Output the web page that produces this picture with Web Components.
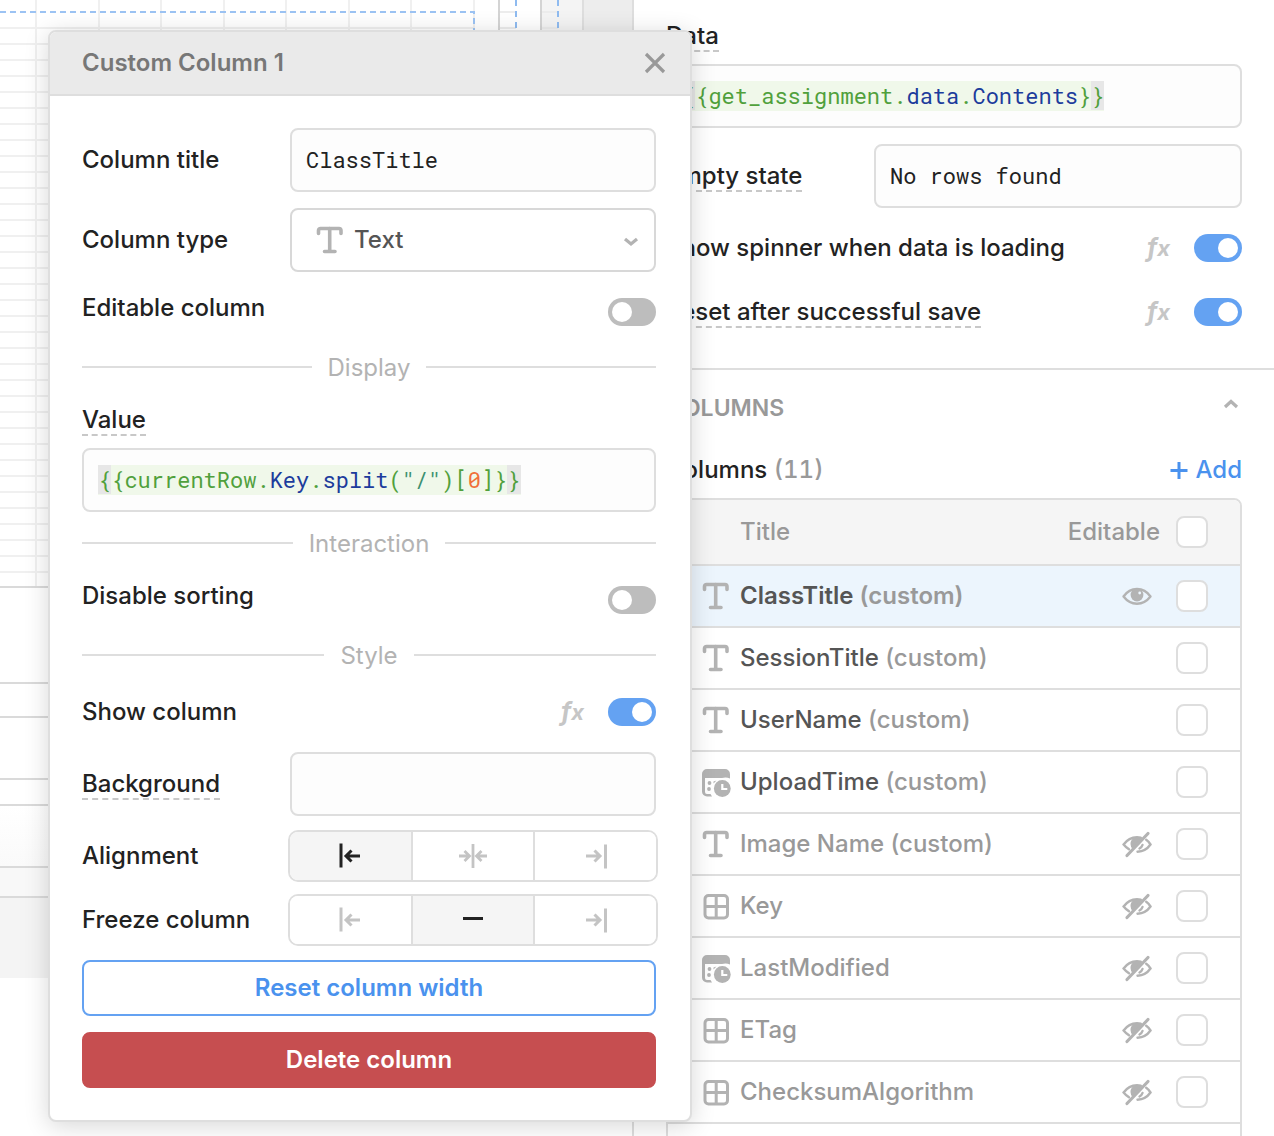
<!DOCTYPE html>
<html lang="en">
<head>
<meta charset="utf-8">
<title>Custom Column 1</title>
<style>
  html, body { margin: 0; height: 100%; }
  body {
    --ink: #222; --mid: #999; --soft: #b3b3b3; --line: #dedede; --field: #fdfdfd;
    --blue: #4a92ee; --blue-soft: #64a2f2; --red: #c64e50;
    --mono: "Roboto Mono", "Liberation Mono", monospace;
    font: 500 24px/40px Inter, "Liberation Sans", sans-serif;
    color: var(--ink); background: #fff; overflow: hidden;
  }
</style>
</head>
<body>
<app-shell>
  <design-canvas></design-canvas>
  <side-panel></side-panel>
  <column-editor slot="popover" heading="Custom Column 1">
    <text-row label="Column title" value="ClassTitle"></text-row>
    <select-row label="Column type" value="Text"></select-row>
    <toggle-row label="Editable column" raised></toggle-row>
    <section-divider>Display</section-divider>
    <code-field label="Value" code='g:{{currentRow.|b:Key|g:.|b:split|g:(|t:"/"|g:)[|o:0|g:]}}'></code-field>
    <section-divider>Interaction</section-divider>
    <toggle-row label="Disable sorting" raised></toggle-row>
    <section-divider>Style</section-divider>
    <toggle-row label="Show column" fx checked></toggle-row>
    <text-row label="Background" value="" hint></text-row>
    <segment-row label="Alignment" options="left,center,right" selected="left"></segment-row>
    <segment-row label="Freeze column" options="left,none,right" selected="none"></segment-row>
    <action-button>Reset column width</action-button>
    <action-button kind="danger">Delete column</action-button>
  </column-editor>
</app-shell>

<script>
const ICONS = {
  text: '<g fill="none" stroke="currentColor" stroke-width="3.600" stroke-linecap="round" stroke-linejoin="round"><path d="M3.500 8.500V5.500a2 2 0 0 1 2-2h18.500a2 2 0 0 1 2 2V8.500"/><path d="M14.700 3.500v23M9.500 26.500h10.500"/></g>',
  grid: '<g fill="none" stroke="currentColor" stroke-width="3"><rect x="4" y="4.500" width="22.500" height="22.500" rx="3.500"/><path d="M15.200 4.500v22.500M4 15.500h22.500"/></g>',
  date: '<path fill="currentColor" d="M6 2h18a5 5 0 0 1 5 5v4.500a10.500 10.500 0 0 0-8-.5H4V25a2 2 0 0 0 2 2h3.500l1.500 2.500H6a5 5 0 0 1-5-5V7a5 5 0 0 1 5-5z"/><path fill="currentColor" d="M12.500 14.500l3-.9-3 3z"/><circle cx="8.500" cy="16" r="1.900" fill="currentColor"/><circle cx="8" cy="22" r="1.900" fill="currentColor"/><circle cx="21.300" cy="21.500" r="8.400" fill="currentColor"/><path d="M21.300 17v5h5" fill="none" stroke="#fff" stroke-width="2.200"/>',
  eye: '<path d="M1.500 15.500C5 10.500 9.500 8 15 8s10 2.500 13.500 7.500C25 20 20.500 22.700 15 22.700S5 20 1.500 15.500z" fill="none" stroke="currentColor" stroke-width="2.400" stroke-linejoin="round"/><circle cx="15" cy="14" r="6.400" fill="currentColor"/><circle cx="17.700" cy="12" r="1.400" fill="#ecf5fd"/>',
  hidden: '<g fill="none" stroke="currentColor" stroke-width="2.400" stroke-linecap="round"><path d="M7 20.300C5 19 3.200 17.500 1.600 15.500 5 10.700 9.500 8.200 15 8.200c1.300 0 2.500.1 3.700.4"/><path d="M24.200 10.800c1.700 1.200 3.100 2.800 4.300 4.700-3.300 4.700-7.500 7-13 7.200"/><path d="M20.500 16c-.5 1.600-1.500 2.700-3 3.500"/></g><path fill="currentColor" d="M20.500 8.500L11 20.500a7 7 0 0 1-2.500-5.500c0-4 3-7 7-7z"/><path d="M26 4.500L5 26.500" stroke="currentColor" stroke-width="3.200" stroke-linecap="round"/>',
  close: '<path d="M6 6l18 18M24 6L6 24" stroke="currentColor" stroke-width="3.200" fill="none"/>',
  down: '<path d="M9 14l6 5 6-5" fill="none" stroke="currentColor" stroke-width="3.200"/>',
  up: '<path d="M9 18l6-5.500 6 5.500" fill="none" stroke="currentColor" stroke-width="3.200"/>',
  left: '<path d="M6 2.500v24M10.500 15H25M16.500 9.500L11 15l5.500 5.500" fill="none" stroke="currentColor" stroke-width="3"/>',
  right: '<path d="M24.500 3.500v24M5 15H19M13.500 9.500l5.500 5.500-5.500 5.500" fill="none" stroke="currentColor" stroke-width="3"/>',
  center: '<path d="M15 3v24M1 15h10M6.500 10l5 5-5 5M29 15H19M23.500 10l-5 5 5 5" fill="none" stroke="currentColor" stroke-width="2.800"/>',
  none: '<path d="M5 13.500h20" stroke="currentColor" stroke-width="3"/>',
  plus: '<path d="M15 7v17M6.500 15.500h17" stroke="currentColor" stroke-width="3"/>'
};
const icon = name => `<svg class="icon" viewBox="0 0 30 30" width="30" height="30" aria-hidden="true">${ICONS[name]}</svg>`;

const BASE = `
  *, *::before { box-sizing: border-box; }
  :host { display: block; }
  .icon { display: block; flex: none; }
  .row { display: flex; align-items: center; }
  .name { flex: none; width: 208px; }
  .hint { display: inline-block; line-height: 28px; border-bottom: 2px dashed #c8c8c8; }
  .box { width: 100%; min-width: 0; height: 64px; margin: 0; padding: 0 14px 2px;
         border: 2px solid var(--line); border-radius: 8px; background: var(--field); color: var(--ink); }
  .row > .box { flex: 1; }
  .mono { font: 400 22px/30px var(--mono); }`;

class Base extends HTMLElement {
  constructor() { super(); this.attachShadow({ mode: "open" }); }
  connectedCallback() { this.shadowRoot.innerHTML = `<style>${BASE}${this.css()}</style>${this.html()}`; }
  css() { return ""; }
  html() { return "<slot></slot>"; }
  get label() {
    const t = this.getAttribute("label");
    return this.hasAttribute("hint") ? `<span class="hint">${t}</span>` : t;
  }
}

customElements.define("app-shell", class extends Base {
  css() { return `:host { display: flex; position: relative; height: 100vh; overflow: hidden; }
    ::slotted(design-canvas) { flex: 1; min-width: 0; }
    ::slotted(side-panel) { flex: none; width: 642px; }
    ::slotted([slot=popover]) { position: absolute; left: 48px; top: 30px; width: 644px; }`; }
  html() { return `<slot></slot><slot name="popover"></slot>`; }
});

customElements.define("design-canvas", class extends Base {
  css() { return `:host { display: flex; align-items: flex-start; overflow: hidden; }
    .frame { flex: 1; min-width: 0; border-right: 2px solid #d4d4d4; }
    .frame svg { display: block; width: 100%; height: 586px; }
    .frame div { border-top: 2px solid #dadada; }
    .a { height: 96px; } .b { height: 34px; } .c { height: 62px; } .d { height: 26px; }
    .e { height: 62px; background: linear-gradient(#fff, #fafafa); }
    .f { height: 30px; background: #f8f8f8; } .g { height: 82px; background: #f4f4f4; }
    .strip { flex: none; width: 42px; height: 978px; border-right: 2px solid #d4d4d4; background: #fff; }
    .strip svg { display: block; width: 18px; height: 100%; }
    .grey { background: #f4f4f4; border-color: #dedede; }
    .edge { width: 48px; background: #ededed; border: 0; }`; }
  html() {
    let lines = "";
    for (const x of [36, 99, 161, 224, 286, 349, 411]) lines += `M${x} 0V586`;
    for (let y = 28; y < 586; y += 16) lines += `M0 ${y}H474`;
    const guide = '<svg><path d="M0 12H16M0 28H16" stroke="#ededed" stroke-width="2"/><path d="M16 0V586" stroke="#8fbbf0" stroke-width="2" stroke-dasharray="6 5"/></svg>';
    return `<div class="frame"><svg><path d="${lines}" stroke="#f0f0f0" stroke-width="2"/><path d="M474 0V586" stroke="#f0f0f0" stroke-width="2"/>
      <path d="M0 12H474V586" fill="none" stroke="#9cc3f3" stroke-width="2" stroke-dasharray="6 4"/></svg>
      <div class="a"></div><div class="b"></div><div class="c"></div><div class="d"></div><div class="e"></div><div class="f"></div><div class="g"></div></div>
      <div class="strip">${guide}</div><div class="strip grey">${guide}</div><div class="strip edge"></div>`;
  }
});

customElements.define("column-editor", class extends Base {
  css() { return `:host { background: #fff; border: 2px solid var(--line); border-radius: 8px; overflow: hidden;
      box-shadow: 0 4px 24px rgba(0,0,0,.16); box-sizing: border-box; }
    header { display: flex; align-items: center; justify-content: space-between; height: 64px; padding: 0 20px 0 32px;
      background: #eaeaea; border-bottom: 2px solid var(--line); }
    h2 { margin: 0; font: 600 24px/40px Inter, sans-serif; color: #777; }
    button { padding: 0; border: 0; background: none; color: #999; }
    .body { display: flex; flex-direction: column; gap: 16px; padding: 32px 34px 32px 32px; }`; }
  html() { return `<header><h2>${this.getAttribute("heading")}</h2><button type="button" aria-label="Close">${icon("close")}</button></header>
    <div class="body"><slot></slot></div>`; }
});

customElements.define("text-row", class extends Base {
  html() { return `<div class="row"><label class="name" for="f">${this.label}</label>
    <input class="box mono" id="f" type="text" value="${this.getAttribute("value")}"></div>`; }
});

customElements.define("select-row", class extends Base {
  css() { return `.wrap { flex: 1; min-width: 0; display: grid; grid-template-columns: 1fr auto; align-items: center; color: var(--soft); }
    .wrap > * { grid-row: 1; }
    select { grid-column: 1 / -1; appearance: none; }
    select.box { font: 500 24px/40px Inter, sans-serif; background: #fff; border-color: #d8d8d8; color: #555; padding: 0 0 0 62px; }
    .kind { grid-column: 1; padding-left: 25px; pointer-events: none; }
    .arrow { grid-column: 2; padding-right: 10px; pointer-events: none; }`; }
  html() { return `<div class="row"><label class="name" for="f">${this.label}</label><span class="wrap">
    <select class="box" id="f"><option>${this.getAttribute("value")}</option></select>
    <span class="kind">${icon("text")}</span><span class="arrow">${icon("down")}</span></span></div>`; }
});

customElements.define("toggle-row", class extends Base {
  css() { return `.row { height: 48px; }
    label { flex: 1; }
    :host([raised]) label { align-self: flex-start; }
    .fx { width: 47px; padding-bottom: 2px; font: italic 700 25px/40px Inter, sans-serif; color: #c6c6c6; }
    .fx small { font-size: 22px; }
    input { appearance: none; flex: none; width: 48px; height: 28px; margin: 0; padding: 4px; border-radius: 14px; background: #bdbdbd; display: flex; }
    input::before { content: ""; width: 20px; height: 20px; border-radius: 50%; background: #fff; }
    input:checked { background: var(--blue-soft); justify-content: flex-end; }`; }
  html() { return `<div class="row"><label for="f">${this.label}</label>${this.hasAttribute("fx") ? '<span class="fx">f<small>x</small></span>' : ""}
    <input id="f" type="checkbox" role="switch" ${this.hasAttribute("checked") ? "checked" : ""}></div>`; }
});

customElements.define("section-divider", class extends Base {
  css() { return `:host { display: flex; align-items: center; gap: 16px; height: 30px; margin-bottom: 2px; color: var(--soft); font-weight: 400; }
    span { padding-top: 2px; }
    i { flex: 1; height: 2px; background: var(--line); }`; }
  html() { return `<i></i><span><slot></slot></span><i></i>`; }
});

customElements.define("code-field", class extends Base {
  css() { return `:host { display: flex; flex-direction: column; gap: 8px; }
    .box { display: flex; align-items: center; padding-bottom: 0; white-space: pre; }
    code { font: inherit; background: #f0f8ea; }
    .g { color: #50a03c; } .b { color: #1c3c9c; } .t { color: #3c9070; } .o { color: #f07038; }
    .m { background: #e7e7e7; }`; }
  html() {
    let out = this.getAttribute("code").split("|").map(p => `<span class="${p[0]}">${p.slice(2)}</span>`).join("");
    out = out.replace("{{", '<span class="m">{</span>{').replace(/}}(?=<\/span>$)/, '}<span class="m">}</span>');
    return `<div id="l"><span class="hint">${this.getAttribute("label")}</span></div>
      <div class="box mono" role="textbox" aria-labelledby="l" contenteditable="true" spellcheck="false"><code>${out}</code></div>`;
  }
});

customElements.define("segment-row", class extends Base {
  css() { return `.row { height: 48px; }
    .set { flex: 1; display: flex; height: 52px; margin: -2px; border: 2px solid var(--line); border-radius: 10px; overflow: hidden; }
    label { flex: 1; display: grid; place-items: center; color: #c4c4c4; background: #fff; }
    label + label { border-left: 2px solid var(--line); }
    label:has(:checked) { background: #f5f5f5; color: var(--ink); }
    input { appearance: none; width: 100%; height: 100%; margin: 0; grid-area: 1 / 1; }
    .icon { grid-area: 1 / 1; pointer-events: none; }`; }
  html() {
    const sel = this.getAttribute("selected");
    return `<div class="row" role="radiogroup" aria-labelledby="l"><span class="name" id="l">${this.label}</span><div class="set">` +
      this.getAttribute("options").split(",").map(o => `<label><input type="radio" name="s" aria-label="${o}" ${o === sel ? "checked" : ""}>${icon(o)}</label>`).join("") + `</div></div>`;
  }
});

customElements.define("action-button", class extends Base {
  css() { return `button { display: block; width: 100%; height: 56px; padding: 0; border: 2px solid var(--blue-soft); border-radius: 8px;
      background: #fff; color: var(--blue); font: 600 24px/40px Inter, sans-serif; }
    :host([kind=danger]) button { background: var(--red); border-color: var(--red); color: #fff; }`; }
  html() { return `<button type="button"><slot></slot></button>`; }
});

customElements.define("side-panel", class extends Base {
  css() { return `:host { box-sizing: border-box; border-left: 2px solid var(--line); background: #fff; overflow: hidden; }
    .fields { display: flex; flex-direction: column; gap: 16px; padding: 16px 32px 32px; border-bottom: 2px solid var(--line); }
    .cols { padding: 18px 32px 0; }
    .bar { display: flex; align-items: center; justify-content: space-between; height: 40px; }
    h3 { margin: 0; font: 600 23px/40px Inter, sans-serif; color: var(--mid); }
    .fold { padding: 0 0 8px; margin-right: -4px; border: 0; background: none; color: var(--soft); }
    .list { margin: 22px 0 8px; }
    .count { color: var(--mid); font-variant-numeric: tabular-nums; }
    .add { display: flex; align-items: center; gap: 2px; padding: 0; border: 0; background: none; color: var(--blue); font: 500 24px/40px Inter, sans-serif; }`; }
  html() { return `<div class="fields">
      <code-field label="Data" code="g:{{get_assignment.|b:data|g:.|b:Contents|g:}}"></code-field>
      <text-row label="Empty state" value="No rows found" hint></text-row>
      <toggle-row label="Show spinner when data is loading" fx checked></toggle-row>
      <toggle-row label="Reset after successful save" hint fx checked></toggle-row>
    </div>
    <section class="cols">
      <div class="bar"><h3>COLUMNS</h3><button class="fold" type="button" aria-label="Collapse">${icon("up")}</button></div>
      <div class="bar list"><span>Columns <span class="count">(11)</span></span><button class="add" type="button">${icon("plus")}Add</button></div>
      <column-table></column-table>
    </section>`; }
});

const COLUMNS = [
  ["text", "ClassTitle", true, "eye"], ["text", "SessionTitle", true, ""], ["text", "UserName", true, ""],
  ["date", "UploadTime", true, ""], ["text", "Image Name", true, "hidden"], ["grid", "Key", false, "hidden"],
  ["date", "LastModified", false, "hidden"], ["grid", "ETag", false, "hidden"], ["grid", "ChecksumAlgorithm", false, "hidden"]
];
customElements.define("column-table", class extends Base {
  css() { return `:host { border: 2px solid var(--line); border-radius: 8px 8px 0 0; overflow: hidden; }
    table { width: 100%; border-spacing: 0; table-layout: fixed; }
    th, td { padding: 0; height: 60px; border-bottom: 2px solid var(--line); text-align: left; font-weight: 500; line-height: 40px; color: #555; box-sizing: content-box; }
    th { height: 64px; background: #f5f5f5; color: var(--mid); }
    td > .icon { color: var(--soft); }
    td:first-child > .icon { margin-left: 33px; }
    .k { width: 72px; } .v { width: 100px; } .c { width: 80px; }
    .v { text-align: right; }
    td.v > .icon { margin-left: 62px; }
    .custom, .off td { color: var(--mid); }
    .current td { background: #ecf5fd; font-weight: 600; }
    input { appearance: none; display: block; width: 32px; height: 32px; margin: 0 0 0 16px; border: 2px solid var(--line); border-radius: 8px; background: #fff; }
    tfoot td { border: 0; }`; }
  html() {
    return `<table><thead><tr><th class="k"></th><th>Title</th><th class="v" id="e">Editable</th><th class="c"><input type="checkbox" aria-labelledby="e"></th></tr></thead><tbody>` +
      COLUMNS.map(([kind, name, custom, vis], i) => `<tr class="${i ? "" : "current"} ${vis === "hidden" ? "off" : ""}"><td class="k">${icon(kind)}</td>
        <td id="n${i}">${name}${custom ? ' <span class="custom">(custom)</span>' : ""}</td><td class="v">${vis ? icon(vis) : ""}</td>
        <td class="c"><input type="checkbox" aria-labelledby="n${i} e"></td></tr>`).join("") +
      `</tbody><tfoot><tr><td colspan="4"></td></tr></tfoot></table>`;
  }
});
</script>
</body>
</html>
